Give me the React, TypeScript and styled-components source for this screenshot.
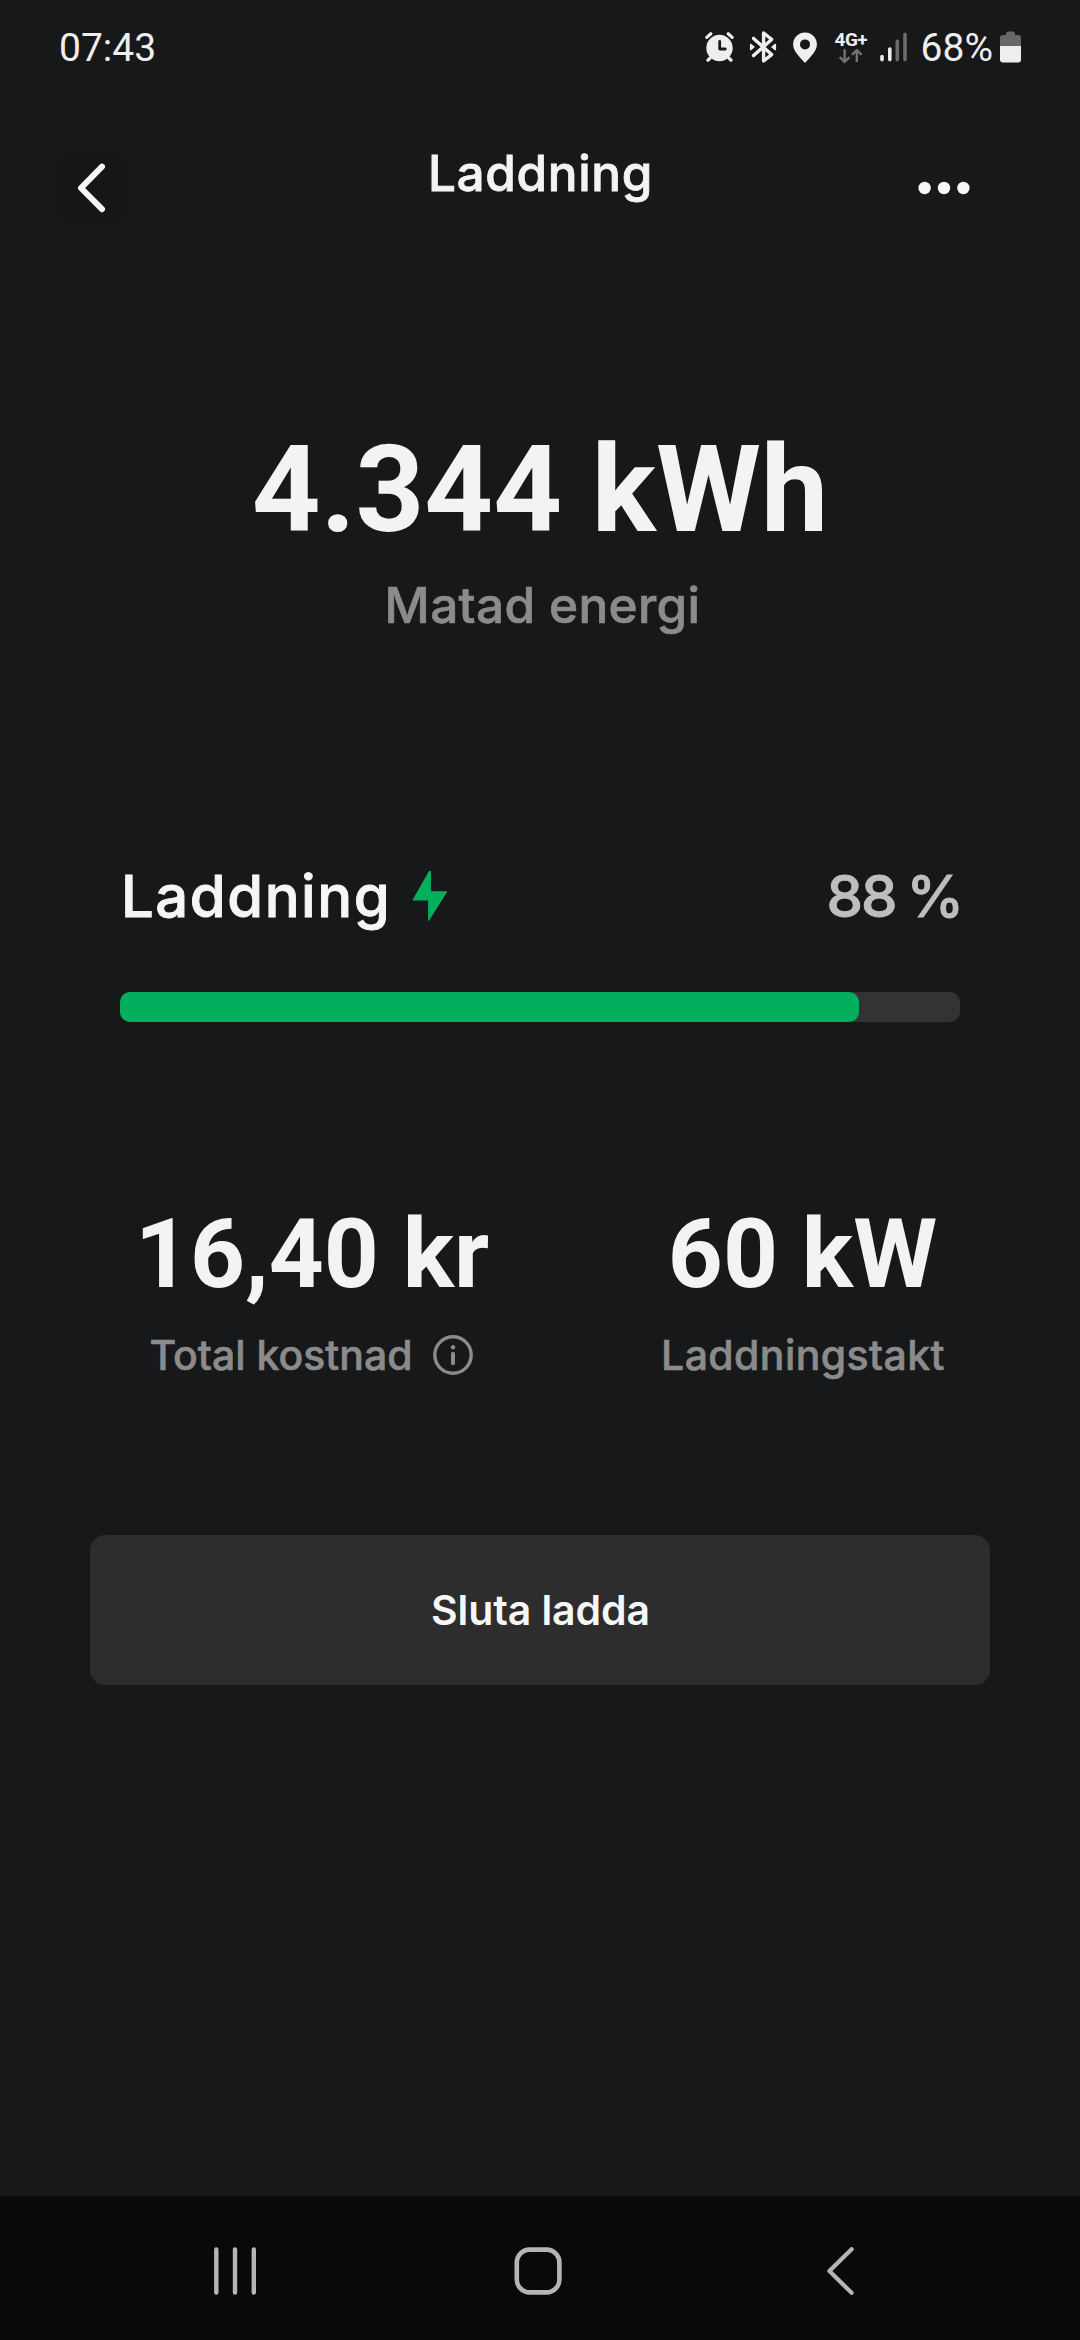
import React from "react";
import styled, { createGlobalStyle } from "styled-components";

const GlobalStyle = createGlobalStyle`
  * { box-sizing: border-box; }
  body { margin: 0; background: #17181a; }
  svg { display: block; flex: none; }
`;

const sans = `Inter, "Liberation Sans", sans-serif`;
const roboto = `Roboto, "Liberation Sans", sans-serif`;

const Screen = styled.div`
  display: flex;
  flex-direction: column;
  width: 1080px;
  height: 2340px;
  background: #17181a;
  color: #f3f3f3;
  font-family: ${sans};
  font-weight: 500;
  white-space: nowrap;
`;

const StatusBar = styled.div`
  display: flex;
  align-items: center;
  justify-content: space-between;
  height: 94px;
  padding: 0 59px;
  color: #eeeeee;
`;

const StatusText = styled.span`
  display: block;
  padding-top: 2px;
  font: 400 39px/48px ${roboto};
`;

const StatusIcons = styled.div`
  display: flex;
  align-items: center;
`;

const StatusSlot = styled.div<{ $gap?: number }>`
  margin-left: ${(p) => p.$gap ?? 0}px;
`;

const Network = styled.div`
  display: flex;
  flex-direction: column;
  width: 34px;
  height: 32px;
`;

const NetworkLabel = styled.span`
  height: 17px;
  font: 700 19px/18px ${roboto};
  letter-spacing: -0.6px;
`;

const Header = styled.header`
  display: grid;
  grid-template-columns: 72px 1fr 72px;
  align-items: start;
  height: 129px;
  padding: 49px 100px 0 55px;
`;

const IconButton = styled.button<{ $background?: string }>`
  width: 72px;
  height: 72px;
  margin: 9px 0 0;
  padding: 0;
  border: 0;
  border-radius: 14px;
  background: ${(p) => p.$background ?? "transparent"};
`;

const Title = styled.h1`
  margin: 0;
  padding-left: 46px;
  font-size: 49.5px;
  font-weight: 500;
  line-height: 60px;
  letter-spacing: 0.65px;
  text-align: center;
  -webkit-text-stroke: 0.8px currentColor;
`;

const Hero = styled.section`
  display: flex;
  flex-direction: column;
  align-items: center;
  gap: 25px;
  padding-top: 207px;
`;

const HeroValue = styled.div`
  font: 700 120px/120px ${roboto};
`;

const HeroLabel = styled.div`
  padding-left: 5px;
  color: #8a8b8a;
  font-size: 49.5px;
  line-height: 60px;
  letter-spacing: 0.35px;
  -webkit-text-stroke: 0.7px currentColor;
`;

const ChargeHeading = styled.div`
  display: flex;
  justify-content: space-between;
  align-items: center;
  margin-top: 226px;
  padding: 0 118px 0 121px;
  font-size: 58px;
  line-height: 70px;
  -webkit-text-stroke: 0.9px currentColor;
`;

const ChargeName = styled.div`
  display: flex;
  align-items: center;
  justify-content: space-between;
  width: 327px;
  color: #f6f6f6;
  letter-spacing: 1.55px;
`;

const ChargePercent = styled.span`
  color: #bebebe;
  letter-spacing: -2px;
  word-spacing: -2.5px;
`;

const Track = styled.div`
  height: 30px;
  margin: 61px 120px 0;
  border-radius: 10px;
  background: #333333;
`;

const Fill = styled.div`
  height: 100%;
  border-radius: 10px;
  background: #03ae5d;
`;

const Stats = styled.section`
  display: grid;
  grid-template-columns: 384px 315px;
  justify-content: space-between;
  margin-top: 184px;
  padding: 0 120px;
`;

const Stat = styled.div`
  display: flex;
  flex-direction: column;
  align-items: center;
  gap: 28px;
`;

const StatValue = styled.div`
  font: 700 96px/96px ${roboto};
`;

const StatLabel = styled.div<{ $spacing?: number; $before?: number; $after?: number }>`
  display: flex;
  align-items: center;
  gap: 20px;
  padding-left: ${(p) => p.$before ?? 0}px;
  padding-right: ${(p) => p.$after ?? 0}px;
  color: #8a8b8a;
  font-size: 41px;
  line-height: 50px;
  letter-spacing: ${(p) => p.$spacing ?? 0}px;
  -webkit-text-stroke: 0.6px currentColor;
`;

const StopButton = styled.button`
  height: 150px;
  margin: 155px 90px 0;
  padding: 0 0 0 1px;
  border: 0;
  border-radius: 15px;
  background: #2d2d2d;
  color: #f6f6f6;
  font: 600 41px/50px ${sans};
  letter-spacing: -0.1px;
`;

const NavBar = styled.nav`
  display: flex;
  justify-content: space-between;
  align-items: center;
  height: 144px;
  margin-top: auto;
  padding: 6px 216px 0 211px;
  background: #090909;
`;

const AlarmIcon = () => (
  <svg width="29" height="30" viewBox="0 0 29 30">
    <g stroke="#eee" strokeLinecap="round" fill="none">
      <path d="M1.8 5.4 5.8 1.8M27.2 5.4 23.2 1.8" strokeWidth="3.2" />
      <path d="M5.2 26 3 28.2M23.8 26l2.2 2.2" strokeWidth="3.2" />
    </g>
    <circle cx="14.5" cy="16" r="13.2" fill="#eee" />
    <path d="M14.7 9.4v7.6h5.6" stroke="#17181a" strokeWidth="2.8" fill="none" strokeLinecap="round" strokeLinejoin="round" />
  </svg>
);

const BluetoothIcon = () => (
  <svg width="28" height="32" viewBox="0 0 28 32">
    <path d="M4.6 7.4 22.6 23.6 14.6 30V2l8 6.4L4.6 24.6" fill="none" stroke="#eee" strokeWidth="3.4" strokeLinecap="round" strokeLinejoin="round" />
    <path d="M1.6 13.4 5 16l-3.4 2.6ZM26.4 13.4 23 16l3.4 2.6Z" fill="#eee" stroke="#eee" strokeWidth="1.4" strokeLinejoin="round" />
  </svg>
);

const PinIcon = () => (
  <svg width="24" height="32" viewBox="0 -1 24 32">
    <path fillRule="evenodd" fill="#eee" d="M12 .5A11.9 11.9 0 0 0 .1 12.4C.1 19 6.5 24.5 11 30q1 1 2 0c4.5-5.5 10.9-11 10.9-17.6A11.9 11.9 0 0 0 12 .5Zm0 6.9a5 5 0 1 1 0 10 5 5 0 0 1 0-10Z" />
  </svg>
);

const DataArrows = () => (
  <svg width="32" height="16" viewBox="0 0 32 16">
    <path d="M9.6 1.2v12M4.8 9.2l4.8 4.8 4.8-4.8M21.8 14V2.2M17 6.8 21.8 2l4.8 4.8" fill="none" stroke="#737373" strokeWidth="2.4" strokeLinejoin="round" />
  </svg>
);

const SignalIcon = () => (
  <svg width="28" height="30" viewBox="0 0 28 30">
    <g strokeWidth="3.6" strokeLinecap="round">
      <path d="M2 24.6v3M9.8 17v10.6" stroke="#eee" />
      <path d="M17.3 9.4v18.2M25 2.4v25.2" stroke="#6b6c6c" />
    </g>
  </svg>
);

const BatteryIcon = () => (
  <svg width="21" height="32" viewBox="0 0 21 32">
    <path d="M0 15V7q0-3 3-3h3V2.5Q6 .6 8 .6h5q2 0 2 1.9V4h3q3 0 3 3v8Z" fill="#666867" />
    <path d="M0 15h21v13.5q0 3-3 3H3q-3 0-3-3Z" fill="#eee" />
  </svg>
);

const BoltIcon = () => (
  <svg width="36" height="52" viewBox="0 0 36 52">
    <path d="M17.4 1.5 1.2 30H16.7V50.3L34.6 21.8H18.4V1.5Z" fill="#03ae5d" stroke="#03ae5d" strokeWidth="1.2" strokeLinejoin="round" />
  </svg>
);

const InfoIcon = () => (
  <svg width="40" height="40" viewBox="0 0 40 40">
    <circle cx="20" cy="20" r="18.2" fill="none" stroke="#8a8b8a" strokeWidth="3.4" />
    <circle cx="20" cy="12.2" r="2.2" fill="#8a8b8a" />
    <path d="M20 18.8v9.4" stroke="#8a8b8a" strokeWidth="4" strokeLinecap="round" />
  </svg>
);

const charge = 88;

export default function App() {
  return (
    <>
      <GlobalStyle />
      <Screen>
        <StatusBar>
          <StatusText>07:43</StatusText>
          <StatusIcons>
            <StatusSlot><AlarmIcon /></StatusSlot>
            <StatusSlot $gap={15}><BluetoothIcon /></StatusSlot>
            <StatusSlot $gap={16}><PinIcon /></StatusSlot>
            <StatusSlot $gap={18}>
              <Network>
                <NetworkLabel>4G+</NetworkLabel>
                <DataArrows />
              </Network>
            </StatusSlot>
            <StatusSlot $gap={11}><SignalIcon /></StatusSlot>
            <StatusSlot $gap={13}><StatusText>68%</StatusText></StatusSlot>
            <StatusSlot $gap={7}><BatteryIcon /></StatusSlot>
          </StatusIcons>
        </StatusBar>

        <Header>
          <IconButton $background="#161616" aria-label="Tillbaka">
            <svg width="72" height="72" viewBox="0 0 72 72">
              <path d="M47 14.6 26 36l21 21.2" fill="none" stroke="#f6f6f6" strokeWidth="6" strokeLinecap="round" strokeLinejoin="round" />
            </svg>
          </IconButton>
          <Title>Laddning</Title>
          <IconButton aria-label="Mer">
            <svg width="72" height="72" viewBox="0 0 72 72" fill="#f6f6f6">
              <circle cx="16.6" cy="36" r="6.2" />
              <circle cx="36" cy="36" r="6.2" />
              <circle cx="55.4" cy="36" r="6.2" />
            </svg>
          </IconButton>
        </Header>

        <Hero>
          <HeroValue>4.344 kWh</HeroValue>
          <HeroLabel>Matad energi</HeroLabel>
        </Hero>

        <ChargeHeading>
          <ChargeName>
            Laddning
            <BoltIcon />
          </ChargeName>
          <ChargePercent>{charge} %</ChargePercent>
        </ChargeHeading>
        <Track>
          <Fill style={{ width: `${charge}%` }} />
        </Track>

        <Stats>
          <Stat>
            <StatValue>16,40 kr</StatValue>
            <StatLabel $after={2}>
              Total kostnad
              <InfoIcon />
            </StatLabel>
          </Stat>
          <Stat>
            <StatValue>60 kW</StatValue>
            <StatLabel $spacing={0.4} $before={1}>Laddningstakt</StatLabel>
          </Stat>
        </Stats>

        <StopButton>Sluta ladda</StopButton>

        <NavBar>
          <svg width="48" height="48" viewBox="0 0 48 48">
            <path d="M5.3 2.4v43.2M24 2.4v43.2M42.8 2.4v43.2" stroke="#b5b5b5" strokeWidth="4.4" strokeLinecap="round" />
          </svg>
          <svg width="48" height="48" viewBox="0 0 48 48">
            <rect x="2.8" y="2.6" width="42.6" height="42.8" rx="13" fill="none" stroke="#b5b5b5" strokeWidth="4.6" />
          </svg>
          <svg width="48" height="48" viewBox="0 0 48 48">
            <path d="M35.6 2.2 13.4 24l22.2 21.8" fill="none" stroke="#b5b5b5" strokeWidth="4.2" strokeLinecap="round" strokeLinejoin="round" />
          </svg>
        </NavBar>
      </Screen>
    </>
  );
}
